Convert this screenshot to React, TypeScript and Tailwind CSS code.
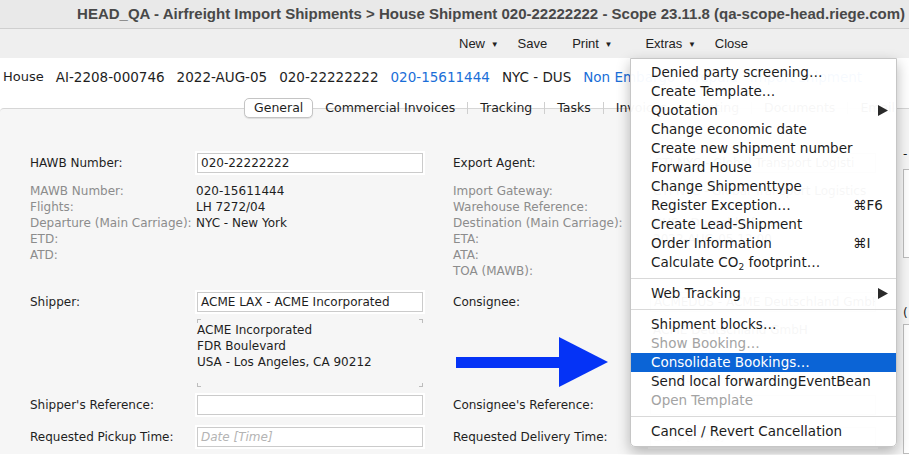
import React from "react";

const DV = "[font-family:'DejaVu_Sans',sans-serif]";

function Input({ value, placeholder }: { value?: string; placeholder?: string }) {
  return (
    <div className="h-[20px] w-[226px] bg-white border border-[#cbcbcb] shadow-[0_0_0_2px_#ffffff] flex items-center px-[3px] overflow-hidden whitespace-nowrap">
      {value ? (
        <span className="text-[#1e1e1e]">{value}</span>
      ) : placeholder ? (
        <span className="italic text-[#b4b4b4]">{placeholder}</span>
      ) : null}
    </div>
  );
}

function Corner({ pos }: { pos: string }) {
  return <span className={`absolute w-[4px] h-[4px] border-[#bdbdbd] ${pos}`} />;
}

type Item = { t: React.ReactNode; dis?: boolean; hi?: boolean; sc?: string; sub?: boolean } | "sep";

const items: Item[] = [
  { t: "Denied party screening…" },
  { t: "Create Template…" },
  { t: "Quotation", sub: true },
  { t: "Change economic date" },
  { t: "Create new shipment number" },
  { t: "Forward House" },
  { t: "Change Shipmenttype" },
  { t: "Register Exception…", sc: "⌘F6" },
  { t: "Create Lead-Shipment" },
  { t: "Order Information", sc: "⌘I" },
  {
    t: (
      <>
        Calculate CO<span className="text-[9px] relative top-[3px]">2</span> footprint…
      </>
    ),
  },
  "sep",
  { t: "Web Tracking", sub: true },
  "sep",
  { t: "Shipment blocks…" },
  { t: "Show Booking…", dis: true },
  { t: "Consolidate Bookings…", hi: true },
  { t: "Send local forwardingEventBean" },
  { t: "Open Template", dis: true },
  "sep",
  { t: "Cancel / Revert Cancellation" },
];

function Menu() {
  return (
    <div className={`absolute z-30 left-[630px] top-[58px] w-[267px] pt-[4px] pb-[5px] bg-white/[0.96] border border-[#c6c6c6] rounded-b-[5px] shadow-[0_5px_14px_rgba(0,0,0,0.28)] text-[13.5px] ${DV}`}>
      {items.map((it, i) =>
        it === "sep" ? (
          <div key={i} className="h-[12px] flex items-center">
            <div className="h-px w-full bg-[#d9d9d9]" />
          </div>
        ) : (
          <div
            key={i}
            className={`h-[19px] flex items-center pl-[20px] relative whitespace-nowrap ${
              it.hi ? "bg-[#0b64d6] text-white" : it.dis ? "text-[#a3a3a3]" : "text-[#1c1c1c]"
            }`}
          >
            <span>{it.t}</span>
            {it.sc && <span className="absolute left-[222px]">{it.sc}</span>}
            {it.sub && (
              <svg className="absolute left-[247px] top-[4px]" width="10" height="11" viewBox="0 0 10 11">
                <polygon points="0,0 10,5.5 0,11" fill="#2a2a2a" />
              </svg>
            )}
          </div>
        )
      )}
    </div>
  );
}

function Arrow() {
  return (
    <svg className="absolute z-20 left-[455px] top-[336px]" width="156" height="53" viewBox="0 0 156 53">
      <rect x="1" y="21" width="106" height="11" fill="#0533f6" />
      <polygon points="104,1 153,26 104,51" fill="#0533f6" />
    </svg>
  );
}

function Sep() {
  return <span className="w-px h-[12px] bg-[#cfcfcf]" />;
}

export default function App() {
  const gray = "text-[#8c8c8c]";
  const rowGrid = "grid grid-cols-[167px_226px_30px_197px_226px] items-start";
  return (
    <div className={`relative w-[909px] h-[455px] overflow-hidden bg-white text-[12px] text-[#1e1e1e] ${DV}`}>
      {/* Title bar */}
      <div className="h-[29px] bg-[#e9e9e9] border-b border-[#cfcfcf] flex items-center justify-end pr-[4px] [font-family:'Liberation_Sans',sans-serif] font-bold text-[15px] text-[#484848] whitespace-nowrap">
        HEAD_QA - Airfreight Import Shipments &gt; House Shipment 020-22222222 - Scope 23.11.8 (qa-scope-head.riege.com)
      </div>
      {/* Toolbar */}
      <div className="h-[29px] bg-[#efefef] flex items-center pl-[459px] [font-family:'Liberation_Sans',sans-serif] text-[13px] text-[#222222] whitespace-nowrap">
        <span className="mr-[19px]">
          New <span className="text-[8px] relative -top-[1px] ml-[2px]">▼</span>
        </span>
        <span className="mr-[25px]">Save</span>
        <span className="mr-[33px]">
          Print <span className="text-[8px] relative -top-[1px] ml-[2px]">▼</span>
        </span>
        <span className="mr-[19px]">
          Extras <span className="text-[8px] relative -top-[1px] ml-[2px]">▼</span>
        </span>
        <span>Close</span>
      </div>
      {/* Header row */}
      <div className="h-[38px] flex items-center pl-[3px] gap-[12px] text-[13.5px] whitespace-nowrap">
        <span className="text-[13px]">House</span>
        <span>AI-2208-000746</span>
        <span>2022-AUG-05</span>
        <span>020-22222222</span>
        <span className="text-[#1a6ed8]">020-15611444</span>
        <span>NYC - DUS</span>
        <span className="text-[#1a6ed8]">Non Embargo</span>
        <span className="text-[#1a6ed8]">Prepaid</span>
        <span className="text-[#1a6ed8]">Import shipment</span>
      </div>
      {/* Tabs */}
      <div className="relative z-10 flex items-center h-[20px] -mb-[10px] ml-[244px] mt-[2px] text-[12.5px] whitespace-nowrap">
        <div className="h-[20px] px-[9px] flex items-center bg-white border border-[#c4c4c4] rounded-[5px] shadow-[0_1px_1px_rgba(0,0,0,0.1)]">
          General
        </div>
        <span className="px-[12px]">Commercial Invoices</span>
        <Sep />
        <span className="px-[12px]">Tracking</span>
        <Sep />
        <span className="px-[12px]">Tasks</span>
        <Sep />
        <span className="px-[12px]">Invoices</span>
        <Sep />
        <span className="px-[12px]">Costing</span>
        <Sep />
        <span className="px-[12px]">Documents</span>
        <Sep />
        <span className="px-[12px]">Email</span>
      </div>
      {/* Panel */}
      <div className="h-[346px] bg-[#f6f6f6] border-t border-[#d6d6d6] rounded-tl-[4px] flex pl-[30px] pt-[44px] whitespace-nowrap">
        <div className="w-[846px] flex flex-col">
          {/* Row A */}
          <div className={`${rowGrid} h-[20px]`}>
            <div className="h-[20px] flex items-center">HAWB Number:</div>
            <Input value="020-22222222" />
            <div />
            <div className="h-[20px] flex items-center">Export Agent:</div>
            <Input value="CTI NYC - Global Transport Logisti" />
          </div>
          {/* Row B */}
          <div className={`${rowGrid} mt-[10px] leading-[16px]`}>
            <div className={`flex flex-col ${gray}`}>
              <span>MAWB Number:</span>
              <span>Flights:</span>
              <span>Departure (Main Carriage):</span>
              <span>ETD:</span>
              <span>ATD:</span>
            </div>
            <div className="flex flex-col -ml-[1px]">
              <span>020-15611444</span>
              <span>LH 7272/04</span>
              <span>NYC - New York</span>
            </div>
            <div />
            <div className={`flex flex-col ${gray}`}>
              <span>Import Gateway:</span>
              <span>Warehouse Reference:</span>
              <span>Destination (Main Carriage):</span>
              <span>ETA:</span>
              <span>ATA:</span>
              <span>TOA (MAWB):</span>
            </div>
            <div className="flex flex-col pl-[3px]">
              <span>CTI NYC - Global Transport Logistics</span>
              <span>&nbsp;</span>
              <span>DUS - Dusseldorf</span>
              <span>2022-AUG-05 12:00</span>
            </div>
          </div>
          {/* Row C */}
          <div className={`${rowGrid} mt-[13px] h-[20px]`}>
            <div className="h-[20px] flex items-center">Shipper:</div>
            <Input value="ACME LAX - ACME Incorporated" />
            <div />
            <div className="h-[20px] flex items-center">Consignee:</div>
            <Input value="ACMEDUS - ACME Deutschland GmbH" />
          </div>
          {/* Row D */}
          <div className={`${rowGrid} mt-[7px] h-[68px]`}>
            <div />
            <div className="relative h-[68px] pt-[3px] leading-[16px] flex flex-col">
              <Corner pos="left-0 top-0 border-l border-t" />
              <Corner pos="right-0 top-0 border-r border-t" />
              <Corner pos="left-0 bottom-0 border-l border-b" />
              <Corner pos="right-0 bottom-0 border-r border-b" />
              <span>ACME Incorporated</span>
              <span>FDR Boulevard</span>
              <span>USA - Los Angeles, CA 90212</span>
            </div>
            <div />
            <div />
            <div className="relative h-[68px] pt-[3px] pl-[3px] leading-[16px] flex flex-col">
              <span>ACME Deutschland GmbH</span>
            </div>
          </div>
          {/* Row E */}
          <div className={`${rowGrid} mt-[8px] h-[20px]`}>
            <div className="h-[20px] flex items-center">Shipper's Reference:</div>
            <Input />
            <div />
            <div className="h-[20px] flex items-center">Consignee's Reference:</div>
            <Input />
          </div>
          {/* Row F */}
          <div className={`${rowGrid} mt-[12px] h-[20px]`}>
            <div className="h-[20px] flex items-center">Requested Pickup Time:</div>
            <Input placeholder="Date [Time]" />
            <div />
            <div className="h-[20px] flex items-center">Requested Delivery Time:</div>
            <Input placeholder="Date [Time]" />
          </div>
        </div>
        {/* third column, cut off at right edge */}
        <div className="ml-[27px] flex flex-col -mt-[8px]">
          <span className="h-[16px]">-</span>
          <div className="mt-[8px] w-[200px] h-[95px] border border-[#bdbdbd] bg-white" />
          <span className="mt-[46px] h-[16px]">(</span>
          <div className="mt-[4px] w-[200px] h-[140px] border border-[#bdbdbd] bg-white" />
        </div>
      </div>
      <Arrow />
      <Menu />
    </div>
  );
}
